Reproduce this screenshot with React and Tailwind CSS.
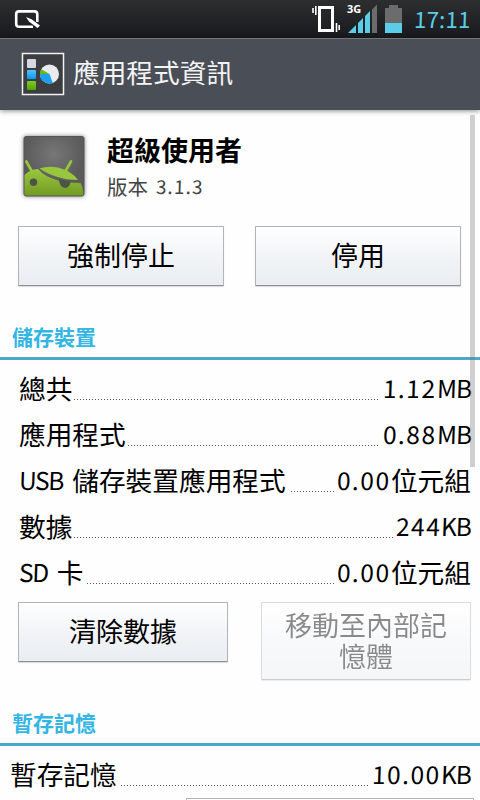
const font = "font-['Noto_Sans_CJK_TC',sans-serif]";

const storageRows = [
  { label: '總共', value: '1.12', unit: 'MB', labelW: 'w-[55px]', valueW: 'w-[92px]' },
  { label: '應用程式', value: '0.88', unit: 'MB', labelW: 'w-[109px]', valueW: 'w-[92px]' },
  { latin: 'USB', label: '儲存裝置應用程式', value: '0.00', unit: '位元組', cjk: true, labelW: 'w-[272px]', valueW: 'w-[136px]' },
  { label: '數據', value: '244', unit: 'KB', labelW: 'w-[55px]', valueW: 'w-[77px]' },
  { latin: 'SD', label: '卡', value: '0.00', unit: '位元組', cjk: true, labelW: 'w-[68px]', valueW: 'w-[136px]' },
];

function StatRow({ row, indent }) {
  return (
    <div className={`flex h-[46px] items-stretch pr-[9px] text-[26.7px] leading-[44px] whitespace-nowrap text-black ${indent}`}>
      <div className={`flex shrink-0 ${row.labelW}`}>
        {row.latin && <span className="mr-[9px] inline-block -skew-x-2 text-[24.5px] tracking-[-1.3px]">{row.latin}</span>}
        <span>{row.label}</span>
      </div>
      <div className="mt-[33px] h-px flex-1 bg-[repeating-linear-gradient(90deg,#555_0_1px,transparent_1px_3px)]" />
      <div className={`flex shrink-0 justify-end ${row.valueW}`}>
        <span className="inline-block -skew-x-2 text-[24.5px] tracking-[1.5px]">{row.value}</span>
        {row.cjk ? <span>{row.unit}</span> : <span className="inline-block -skew-x-2 text-[24.5px] tracking-[-0.9px]">{row.unit}</span>}
      </div>
    </div>
  );
}

function Button({ children, className }) {
  return (
    <button className={`rounded-[1px] border border-[#b2b4b9] border-b-[#8e9095] bg-linear-to-b from-white via-[#f2f4f7] to-[#e9edf1] pb-[2px] text-center text-[27px] text-black shadow-[0_1px_1px_rgba(0,0,0,0.15)] ${className}`}>
      {children}
    </button>
  );
}

function SectionTitle({ children }) {
  return (
    <h2 className="h-[42px] border-b-[3px] border-[#4aa8ca] pl-3 text-[21px] leading-[36px] font-bold text-[#33b5e5]">
      {children}
    </h2>
  );
}

function StatusBar() {
  return (
    <div className="flex h-[38px] items-start bg-linear-to-b from-[#2d2e30] to-[#191a1d]">
      <svg className="mt-2 ml-3 h-6 w-8 shrink-0" viewBox="0 0 32 24" fill="none" stroke="#fff">
        <path d="M21 18.8H7Q4.2 18.8 4.2 16V6.2Q4.2 3.4 7 3.4H22.5Q25.3 3.4 25.3 6.2V14" strokeWidth="2.6" />
        <path d="M14 9 17 13.5 25.5 20 28 17.5 19.5 11.3Z" fill="#fff" stroke="#252628" strokeWidth="2" paintOrder="stroke" />
      </svg>
      <svg className="ml-auto h-[38px] w-[104px] shrink-0" viewBox="310 0 104 38">
        <path d="M319.5 7.5H332.5V30.5H319.5Z" fill="none" stroke="#fff" strokeWidth="3" />
        <path d="M313 8V13M315.8 6V15M336.5 23V32M339.2 25V30" stroke="#fff" strokeWidth="1.6" />
        <text x="347" y="13.3" fill="#fff" fontSize="11" fontWeight="700" className="font-['Open_Sans']">3G</text>
        <path d="M348 33 356 25V33ZM358 23 363 18V33H358ZM365 16 370 11V33H365Z" fill="#5bcde8" />
        <path d="M372 9.5 377 4.5V33H372Z" fill="#6c6c6c" />
        <path d="M389 5H398V8H402V23H385V8H389Z" fill="#6c6c6c" />
        <path d="M385 23H402V33H385Z" fill="#5bcde8" />
      </svg>
      <span className="w-[66px] -skew-x-2 text-[22.5px] leading-[37px] tracking-[0.1px] text-[#5bcde8]">17:11</span>
    </div>
  );
}

function AppInfoIcon() {
  return (
    <svg className="mt-[13px] ml-[21px] h-[44px] w-[44px] shrink-0" viewBox="0 0 44 44">
      <defs>
        <linearGradient id="blue" x2="0" y2="1"><stop stopColor="#59c1fa" /><stop offset="1" stopColor="#0799f2" /></linearGradient>
        <linearGradient id="green" x2="0" y2="1"><stop stopColor="#83c82b" /><stop offset="1" stopColor="#55a500" /></linearGradient>
      </defs>
      <rect x="1.5" y="1.5" width="41" height="41" fill="#3c3d40" stroke="#f1f1f1" strokeWidth="1.5" />
      <rect x="6" y="7" width="9" height="9" rx="1" fill="#d5d8de" />
      <rect x="6" y="18" width="9" height="9" rx="1" fill="url(#blue)" />
      <rect x="6" y="29" width="9" height="9" rx="1" fill="url(#green)" />
      <circle cx="28.5" cy="22" r="9.5" fill="#e7eaee" />
      <path d="M28.5 22 31.8 31A9.5 9.5 0 0 1 19 22Z" fill="#1b9ff1" />
      <path d="M28.5 22 19 22A9.5 9.5 0 0 1 20.3 17.3Z" fill="#65b818" />
    </svg>
  );
}

function SuperuserIcon() {
  return (
    <svg className="h-[70px] w-[70px] shrink-0 drop-shadow-[0_0_2px_rgba(0,0,0,0.5)]" viewBox="19 132 70 70">
      <defs>
        <radialGradient id="plate" cy="0.3"><stop stopColor="#777" /><stop offset="1" stopColor="#5a5a5a" /></radialGradient>
        <linearGradient id="droid" x2="0" y2="1"><stop stopColor="#9bc93d" /><stop offset="1" stopColor="#719a24" /></linearGradient>
      </defs>
      <rect x="24" y="136.5" width="60" height="59.5" rx="2" fill="url(#plate)" stroke="#555" />
      <path d="M26.3 161.5 32 171.5M71 161.5 65.5 171" stroke="#98c63c" strokeWidth="2.7" strokeLinecap="round" />
      <path d="M24.5 175Q30 169.500 38 169Q45 177 58 180.500Q69 183 80.500 183Q83 187 83.5 195.5H24.5Z" fill="url(#droid)" />
      <path d="M39.5 168.3Q49 165.5 58 167.5Q72 171 78 180Q66 180 56 176.500Q46 173.500 39.5 168.3Z" fill="#98c63c" />
      <path d="M59 178.8Q66 181.500 70.5 182Q69.5 188 64.5 188Q59 187 59 178.8Z" fill="#4d5448" />
      <circle cx="33.5" cy="182.2" r="3.7" fill="#4d5448" />
    </svg>
  );
}

export default function App() {
  return (
    <div className={`relative h-[800px] w-[480px] overflow-hidden bg-[#fefefe] ${font}`}>
      <StatusBar />
      <header className="flex h-[72px] border-t border-[#73767b] bg-[#4a4e56] shadow-[0_1px_5px_rgba(0,0,0,0.45)]">
        <AppInfoIcon />
        <h1 className="ml-2 text-[26.7px] leading-[66px] text-[#f3f3f3]">應用程式資訊</h1>
      </header>

      <section className="flex h-[116px] pt-[22px] pl-[19px]">
        <SuperuserIcon />
        <div className="ml-[18px]">
          <div className="h-9 text-[27px] leading-[35px] font-bold text-black">超級使用者</div>
          <div className="flex text-[20.5px] leading-[36px] text-[#444]">
            <span>版本</span>
            <span className="ml-[8px] inline-block -skew-x-2 text-[19px] tracking-[1.1px]">3.1.3</span>
          </div>
        </div>
      </section>

      <div className="flex h-[92px] gap-[31px] pl-[18px]">
        <Button className="h-[60px] w-[206px]">強制停止</Button>
        <Button className="h-[60px] w-[206px]">停用</Button>
      </div>

      <SectionTitle>儲存裝置</SectionTitle>
      <div className="pt-[6px]">
        {storageRows.map((row, i) => <StatRow key={i} row={row} indent="pl-[19px]" />)}
      </div>

      <div className="mt-[6px] flex h-[102px] gap-[33px] pl-[18px]">
        <Button className="h-[60px] w-[210px]">清除數據</Button>
        <Button className="h-[78px] w-[210px] px-4 leading-[31px] opacity-45">移動至內部記憶體</Button>
      </div>

      <SectionTitle>暫存記憶</SectionTitle>
      <div className="pt-[6px]">
        <StatRow row={{ label: '暫存記憶', value: '10.00', unit: 'KB', labelW: 'w-[111px]', valueW: 'w-[102px]' }} indent="pl-[10px]" />
      </div>
      <Button className="ml-[186px] h-[61px] w-[288px]" />
      <div className="absolute top-[115px] left-[470px] h-[352px] w-[5px] bg-[#787878]/35" />
    </div>
  );
}
